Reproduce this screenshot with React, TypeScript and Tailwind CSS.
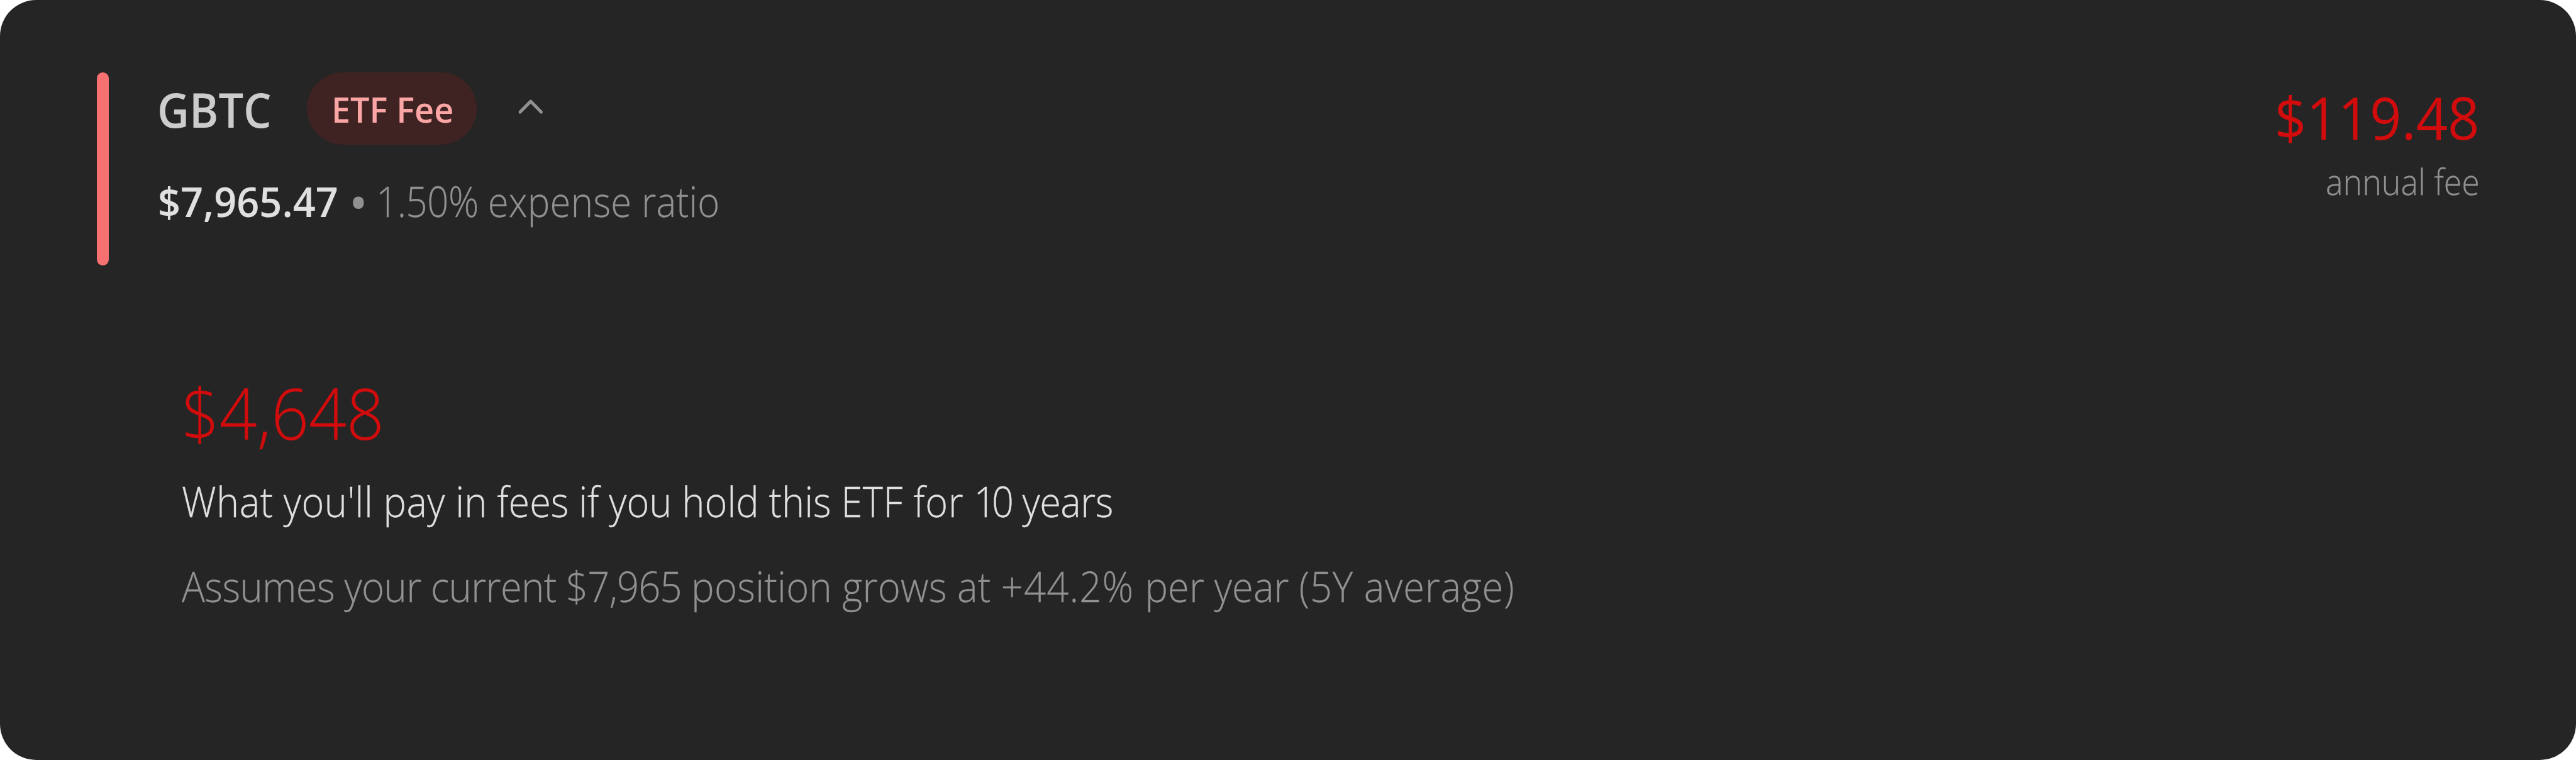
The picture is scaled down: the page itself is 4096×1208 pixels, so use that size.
import React from 'react';

interface TextRun {
  text: string;
  tracking?: string;
}

interface Holding {
  ticker: string;
  tag: string;
  value: string;
  ratio: TextRun[];
  annualFee: string;
  projectedFee: string;
  summary: TextRun[];
  note: TextRun[];
}

const holding: Holding = {
  ticker: 'GBTC',
  tag: 'ETF Fee',
  value: '$7,965.47',
  ratio: [
    { text: '1.50% ', tracking: 'tracking-[-0.5px]' },
    { text: 'expense ratio', tracking: 'tracking-[0.2px]' },
  ],
  annualFee: '$119.48',
  projectedFee: '$4,648',
  summary: [
    { text: "What you'll pay ", tracking: 'tracking-[0.5px]' },
    { text: 'in fees if you hold this ' },
    { text: 'ETF for ', tracking: 'tracking-[0.6px]' },
    { text: '1', tracking: 'tracking-[-7px]' },
    { text: '0 ', tracking: 'tracking-[-1.2px]' },
    { text: 'years', tracking: 'tracking-[-0.5px]' },
  ],
  note: [
    { text: 'Assumes your current ', tracking: 'tracking-[-0.67px]' },
    { text: '$7,965 ', tracking: 'tracking-[-0.9px]' },
    { text: 'position grows at ', tracking: 'tracking-[0.25px]' },
    { text: '+44.2% ', tracking: 'tracking-[1.2px]' },
    { text: 'per year ' },
    { text: '(5Y average)', tracking: 'tracking-[0.8px]' },
  ],
};

const Runs = ({ runs }: { runs: TextRun[] }) => (
  <>
    {runs.map(run => (
      <span key={run.text} className={run.tracking}>{run.text}</span>
    ))}
  </>
);

const ChevronUp = () => (
  <svg className="w-[57.6px] h-[57.6px] text-[#919191]" viewBox="0 0 57.6 57.6" fill="none">
    <path
      d="M12.1 34.1 28.8 17.1 45.5 34.1"
      stroke="currentColor"
      strokeWidth="5"
      strokeLinecap="round"
      strokeLinejoin="round"
    />
  </svg>
);

const FeeCard: React.FC<{ item: Holding }> = ({ item }) => (
  <div className="w-[4096px] h-[1208px] rounded-[57.6px] bg-[#252525] px-[153.6px] pt-[115.2px] whitespace-nowrap">
    {/* Header */}
    <div className="flex items-start h-[307.2px]">
      <div className="w-[19.2px] h-full rounded-full bg-[#f87171]"></div>

      <div className="ml-[76.8px] flex-1">
        <div className="flex items-center gap-[57.6px] h-[115.2px]">
          <span className="w-[180.9px] pt-[3.4px] text-[75.3px] leading-none font-semibold text-[#cccccc] origin-left scale-x-[0.934]">
            {item.ticker}
          </span>
          <span className="w-[269.5px] h-[115.2px] pl-[39.4px] rounded-full bg-[#3f2222] flex items-center">
            <span className="pt-[2.8px] text-[56.4px] leading-none font-semibold text-[#fca5a5] origin-left scale-x-[0.957]">
              {item.tag}
            </span>
          </span>
          <ChevronUp />
        </div>

        <div className="flex mt-[42px] text-[65.9px] leading-[96px] font-light text-[#919191]">
          <span className="w-[303px] ml-[1.6px] font-semibold text-[#e0e0e0] origin-left scale-x-[0.957]">{item.value}</span>
          <span className="w-[43.5px] text-[83px] font-normal">•</span>
          <span className="whitespace-pre origin-left scale-x-[0.908] [-webkit-text-stroke:0.3px]">
            <Runs runs={item.ratio} />
          </span>
        </div>
      </div>

      <div className="flex flex-col items-end pt-[6px]">
        <span className="text-[94.1px] leading-[130px] text-[#d20c0c] origin-right scale-x-[0.9375]">{item.annualFee}</span>
        <span className="text-[56.4px] leading-[76.8px] font-light text-[#919191] origin-right scale-x-[0.921] [-webkit-text-stroke:0.3px]">annual fee</span>
      </div>
    </div>

    {/* Ten year projection */}
    <div className="flex flex-col items-start mt-[156.4px] pl-[135.4px] font-light whitespace-pre [-webkit-text-stroke:0.3px]">
      <span className="text-[112.9px] leading-[153.6px] text-[#d20c0c] origin-left scale-x-[0.929]">{item.projectedFee}</span>
      <span className="mt-[16.6px] text-[65.9px] leading-[96px] text-[#e0e0e0] origin-left scale-x-[0.929]">
        <Runs runs={item.summary} />
      </span>
      <span className="mt-[38.7px] text-[65.9px] leading-[96px] text-[#919191] origin-left scale-x-[0.934]">
        <Runs runs={item.note} />
      </span>
    </div>
  </div>
);

export default function App() {
  return (
    <div className="bg-white font-['Open_Sans',sans-serif]">
      <FeeCard item={holding} />
    </div>
  );
}
